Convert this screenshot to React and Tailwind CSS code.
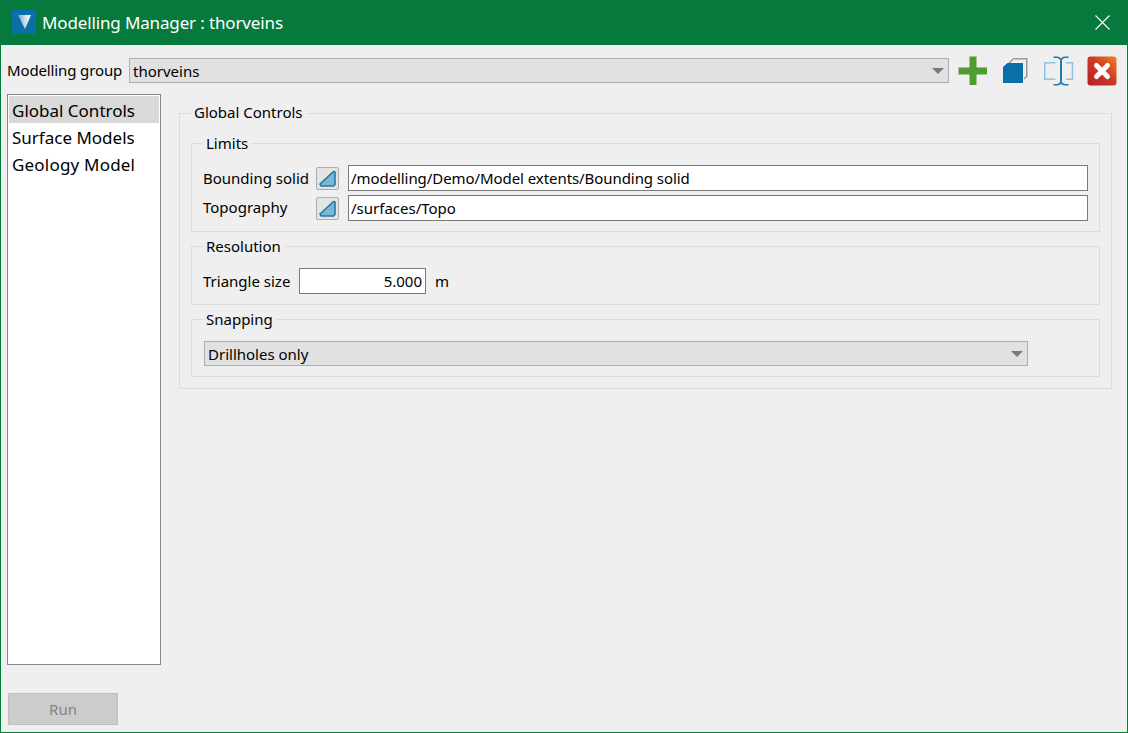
import React from "react";

const FONT = "font-['Noto_Sans','Open_Sans',sans-serif]";

function ComboArrow() {
  return <span className="w-0 h-0 border-x-[6px] border-x-transparent border-t-[6px] border-t-[#7a7a7a]" />;
}

function Combo({ value, className }) {
  return (
    <div className={`h-[25px] flex items-center justify-between pl-[3px] pr-[4px] bg-[#e1e1e1] border border-[#adadad] text-[15px] text-black ${className}`}>
      <span className="pt-[2px]">{value}</span>
      <ComboArrow />
    </div>
  );
}

function Group({ title, className, legendClass = "leading-[23px]", children }) {
  return (
    <fieldset className={`border border-[#dcdcdc] ${className}`}>
      <legend className={`px-[3px] h-[22px] text-[15px] text-black ${legendClass}`}>{title}</legend>
      {children}
    </fieldset>
  );
}

function SolidButton() {
  return (
    <button className="w-[23px] h-[23px] flex items-center justify-center bg-[#e4e4e4] border border-[#adadad] rounded-[2px]">
      <svg width="19" height="19" viewBox="0 0 19 19">
        <path d="M2 15 L15.500 2.500 L17 3 L17 15.500 L15.500 17 L3 17 Z" fill="#7db6d3" stroke="#1f78a8" strokeWidth="1.600" strokeLinejoin="round" />
      </svg>
    </button>
  );
}

function TextField({ value, className }) {
  return (
    <div className={`h-[26px] flex items-center pl-[2px] pr-[3px] bg-white border border-[#7a7a7a] text-[15px] text-black ${className}`}>
      {value}
    </div>
  );
}

function PlusIcon() {
  return (
    <svg width="30" height="30" viewBox="0 0 30 30">
      <path d="M11.500 0.500h7v11h10.500v7H18.500v10.500h-7V18.500H0.500v-7h11z" fill="#4f9d31" />
    </svg>
  );
}

function CopyIcon() {
  return (
    <svg width="30" height="30" viewBox="0 0 30 30">
      <path d="M8 7 L12.500 2.750 H25.750 V20.500 L23 23" fill="none" stroke="#9a9a9a" strokeWidth="1.500" />
      <path d="M2 11 L6.500 7 H22 V27 H2 Z" fill="#0a6fa8" />
    </svg>
  );
}

function RenameIcon() {
  return (
    <svg width="30" height="30" viewBox="0 0 30 30">
      <path d="M11.500 6.750H0.750V23.250H11.500M22 6.750H28.500V23.250H22" fill="none" stroke="#8fc3de" strokeWidth="1.500" />
      <path d="M17 4.500V25.500" fill="none" stroke="#1f7bb0" strokeWidth="2" />
      <path d="M9.500 1.250h3.500c2 0 3.500 1 4 3.250c.5-2.250 2-3.250 4-3.250h3.500M9.500 28.750h3.500c2 0 3.500-1 4-3.250c.5 2.250 2 3.250 4 3.250h3.500" fill="none" stroke="#1f7bb0" strokeWidth="1.500" />
    </svg>
  );
}

function DeleteIcon() {
  return (
    <svg width="30" height="30" viewBox="0 0 30 30">
      <defs>
        <linearGradient id="del" x1="0" y1="1" x2="1" y2="0">
          <stop offset="0" stopColor="#b51f28" />
          <stop offset="0.55" stopColor="#cf3b24" />
          <stop offset="1" stopColor="#ee8126" />
        </linearGradient>
      </defs>
      <rect x="0.500" y="0.500" width="29" height="29" rx="3" fill="url(#del)" />
      <path d="M9.500 9.500 L20.500 20.500 M20.500 9.500 L9.500 20.500" stroke="#fff" strokeWidth="5" strokeLinecap="round" />
    </svg>
  );
}

export default function App() {
  return (
    <div className={`w-[1128px] h-[733px] flex flex-col bg-[#efefef] border-x border-b border-[#057a3c] overflow-hidden ${FONT}`}>
      {/* title bar */}
      <div className="h-[45px] shrink-0 -mx-px flex items-center bg-[#057a3c] pl-[12px] pr-[18px]">
        <div className="w-[24px] h-[24px] mb-px flex items-center justify-center bg-[#0a6ea8]">
          <svg width="13" height="14" viewBox="0 0 13 14">
            <defs>
              <linearGradient id="logo" x1="0" y1="0" x2="1" y2="0">
                <stop offset="0" stopColor="#6ea6c4" />
                <stop offset="0.5" stopColor="#c5dce8" />
                <stop offset="1" stopColor="#ffffff" />
              </linearGradient>
            </defs>
            <path d="M0 0 H13 L7 14 Z" fill="url(#logo)" />
          </svg>
        </div>
        <span className="ml-[6px] text-[17px] tracking-[-0.14px] text-white">Modelling Manager : thorveins</span>
        <svg className="ml-auto" width="15" height="15" viewBox="0 0 15 15">
          <path d="M0.500 0.500 L14.500 14.500 M14.500 0.500 L0.500 14.500" stroke="#fff" strokeWidth="1.100" />
        </svg>
      </div>

      {/* modelling group row */}
      <div className="h-[49px] shrink-0 flex items-center pl-[6px] pr-[10px] pt-[2px]">
        <span className="w-[122px] shrink-0 text-[15px] tracking-[-0.13px] text-black">Modelling group</span>
        <Combo value="thorveins" className="w-[820px] shrink-0" />
        <div className="ml-[9px] flex gap-[13px] shrink-0">
          <PlusIcon />
          <CopyIcon />
          <RenameIcon />
          <DeleteIcon />
        </div>
      </div>

      <div className="flex-1 flex pl-[6px] pr-[16px]">
        <div className="w-[154px] shrink-0 flex flex-col">
          <div className="h-[571px] bg-white border border-[#828790] p-px text-[17px] leading-[29px] text-black">
            <div className="h-[27px] pl-[3px] bg-[#d9d9d9]">Global Controls</div>
            <div className="h-[27px] pl-[3px]">Surface Models</div>
            <div className="h-[27px] pl-[3px] tracking-[0.2px]">Geology Model</div>
          </div>
          <button className="mt-[28px] ml-px w-[110px] h-[32px] bg-[#cccccc] border border-[#bfbfbf] text-[15px] text-[#838383]">Run</button>
        </div>

        <div className="ml-[18px] flex-1 min-w-0">
          <Group title="Global Controls" legendClass="leading-[21px]" className="h-[287px] mt-[8px] px-[11px]">
            <Group title="Limits" className="h-[100px] mt-[8px] px-[11px]">
              <div className="flex items-center h-[30px] mt-[9px]">
                <span className="w-[113px] shrink-0 text-[15px] text-black">Bounding solid</span>
                <SolidButton />
                <TextField value="/modelling/Demo/Model extents/Bounding solid" className="ml-[9px] w-[740px] tracking-[-0.07px]" />
              </div>
              <div className="flex items-center h-[30px]">
                <span className="w-[113px] shrink-0 pb-[2px] text-[15px] text-black">Topography</span>
                <SolidButton />
                <TextField value="/surfaces/Topo" className="ml-[9px] w-[740px]" />
              </div>
            </Group>
            <Group title="Resolution" className="h-[70px] mt-[3px] px-[11px]">
              <div className="flex items-center h-[36px] mt-[6px]">
                <span className="w-[96px] shrink-0 text-[15px] text-black">Triangle size</span>
                <TextField value="5.000" className="w-[127px] justify-end" />
                <span className="ml-[9px] text-[15px] text-black">m</span>
              </div>
            </Group>
            <Group title="Snapping" className="h-[69px] mt-[3px] px-[11px]">
              <Combo value="Drillholes only" className="w-[824px] ml-px mt-[11px]" />
            </Group>
          </Group>
        </div>
      </div>
    </div>
  );
}
